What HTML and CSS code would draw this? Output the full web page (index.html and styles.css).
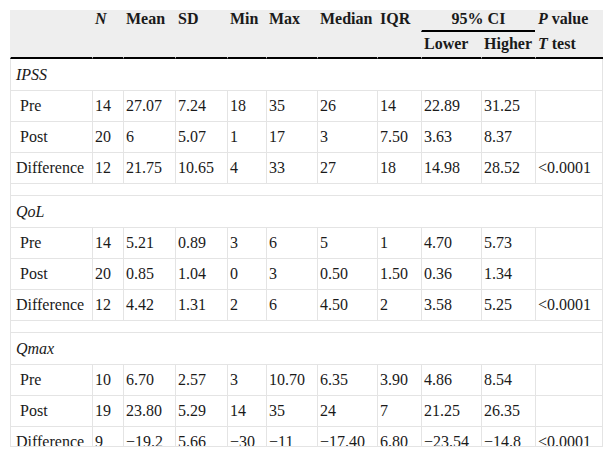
FILE: index.html
```html
<!DOCTYPE html>
<html>
<head>
<meta charset="utf-8">
<link rel="stylesheet" href="styles.css">
</head>
<body>
<div class="wrap">
<table class="stats">
<colgroup>
<col class="w82"><col class="w31"><col class="w52"><col class="w52"><col class="w39"><col class="w51"><col class="w60"><col class="w44"><col class="w60"><col class="w54"><col class="w68">
</colgroup>
<thead>
<tr>
<th rowspan="2" class="span"></th>
<th rowspan="2" class="span"><i>N</i></th>
<th rowspan="2" class="span">Mean</th>
<th rowspan="2" class="span">SD</th>
<th rowspan="2" class="span">Min</th>
<th rowspan="2" class="span">Max</th>
<th rowspan="2" class="span">Median</th>
<th rowspan="2" class="span">IQR</th>
<th colspan="2" class="ci">95% CI</th>
<th class="pval"><i>P</i> value</th>
</tr>
<tr>
<th class="sub">Lower</th>
<th class="sub">Higher</th>
<th class="sub"><i>T</i> test</th>
</tr>
</thead>
<tbody>
<tr><td colspan="11" class="cat">IPSS</td></tr>
<tr><td>&nbsp;Pre</td><td>14</td><td>27.07</td><td>7.24</td><td>18</td><td>35</td><td>26</td><td>14</td><td>22.89</td><td>31.25</td><td></td></tr>
<tr><td>&nbsp;Post</td><td>20</td><td>6</td><td>5.07</td><td>1</td><td>17</td><td>3</td><td>7.50</td><td>3.63</td><td>8.37</td><td></td></tr>
<tr><td>Difference</td><td>12</td><td>21.75</td><td>10.65</td><td>4</td><td>33</td><td>27</td><td>18</td><td>14.98</td><td>28.52</td><td>&lt;0.0001</td></tr>
<tr><td colspan="11" class="gap"></td></tr>
<tr><td colspan="11" class="cat">QoL</td></tr>
<tr><td>&nbsp;Pre</td><td>14</td><td>5.21</td><td>0.89</td><td>3</td><td>6</td><td>5</td><td>1</td><td>4.70</td><td>5.73</td><td></td></tr>
<tr><td>&nbsp;Post</td><td>20</td><td>0.85</td><td>1.04</td><td>0</td><td>3</td><td>0.50</td><td>1.50</td><td>0.36</td><td>1.34</td><td></td></tr>
<tr><td>Difference</td><td>12</td><td>4.42</td><td>1.31</td><td>2</td><td>6</td><td>4.50</td><td>2</td><td>3.58</td><td>5.25</td><td>&lt;0.0001</td></tr>
<tr><td colspan="11" class="gap"></td></tr>
<tr><td colspan="11" class="cat">Qmax</td></tr>
<tr><td>&nbsp;Pre</td><td>10</td><td>6.70</td><td>2.57</td><td>3</td><td>10.70</td><td>6.35</td><td>3.90</td><td>4.86</td><td>8.54</td><td></td></tr>
<tr><td>&nbsp;Post</td><td>19</td><td>23.80</td><td>5.29</td><td>14</td><td>35</td><td>24</td><td>7</td><td>21.25</td><td>26.35</td><td></td></tr>
<tr><td>Difference</td><td>9</td><td>&minus;19.2</td><td>5.66</td><td>&minus;30</td><td>&minus;11</td><td>&minus;17.40</td><td>6.80</td><td>&minus;23.54</td><td>&minus;14.8</td><td>&lt;0.0001</td></tr>
</tbody>
</table>
</div>
</body>
</html>
```
FILE: styles.css
```css
body {
  margin: 10px;
  background: #fff;
  font-family: "Liberation Serif", "Times New Roman", serif;
  font-size: 16px;
  color: #1a1a1a;
}
.wrap {
  height: 436px;
  overflow: hidden;
  border-bottom: 1px solid #e4e4e4;
}
.stats {
  width: 593px;
  table-layout: fixed;
  border-collapse: separate;
  border-spacing: 0;
}
.w82 { width: 82px; }
.w31 { width: 31px; }
.w52 { width: 52px; }
.w39 { width: 39px; }
.w51 { width: 51px; }
.w60 { width: 60px; }
.w44 { width: 44px; }
.w54 { width: 54px; }
.w68 { width: 68px; }

.stats th {
  background: #eeeeee;
  font-weight: bold;
  text-align: left;
  line-height: 14px;
  padding: 0 2px;
  border-left: 1px solid #eeeeee;
  white-space: nowrap;
}
.stats th.span {
  vertical-align: top;
  padding-top: 2px;
  border-bottom: 2px solid #000;
}
.stats th.span:first-child {
  padding-left: 5px;
}
.stats th.ci {
  text-align: center;
  padding-top: 2px;
  padding-bottom: 4px;
  border-bottom: 2px solid #000;
}
.stats th.pval {
  padding-top: 2px;
  padding-bottom: 6px;
}
.stats th.sub {
  padding-top: 5px;
  padding-bottom: 6px;
  border-bottom: 2px solid #000;
}
.stats td {
  line-height: 30px;
  padding: 0 2px;
  border-left: 1px solid #e4e4e4;
  border-bottom: 1px solid #e4e4e4;
  white-space: nowrap;
  vertical-align: middle;
}
.stats td:first-child {
  padding-left: 5px;
}
.stats td:last-child {
  border-right: 1px solid #e4e4e4;
}
.stats td.cat {
  font-style: italic;
  line-height: 31px;
}
.stats td.gap {
  height: 11px;
  line-height: 0;
  padding: 0;
}
```
